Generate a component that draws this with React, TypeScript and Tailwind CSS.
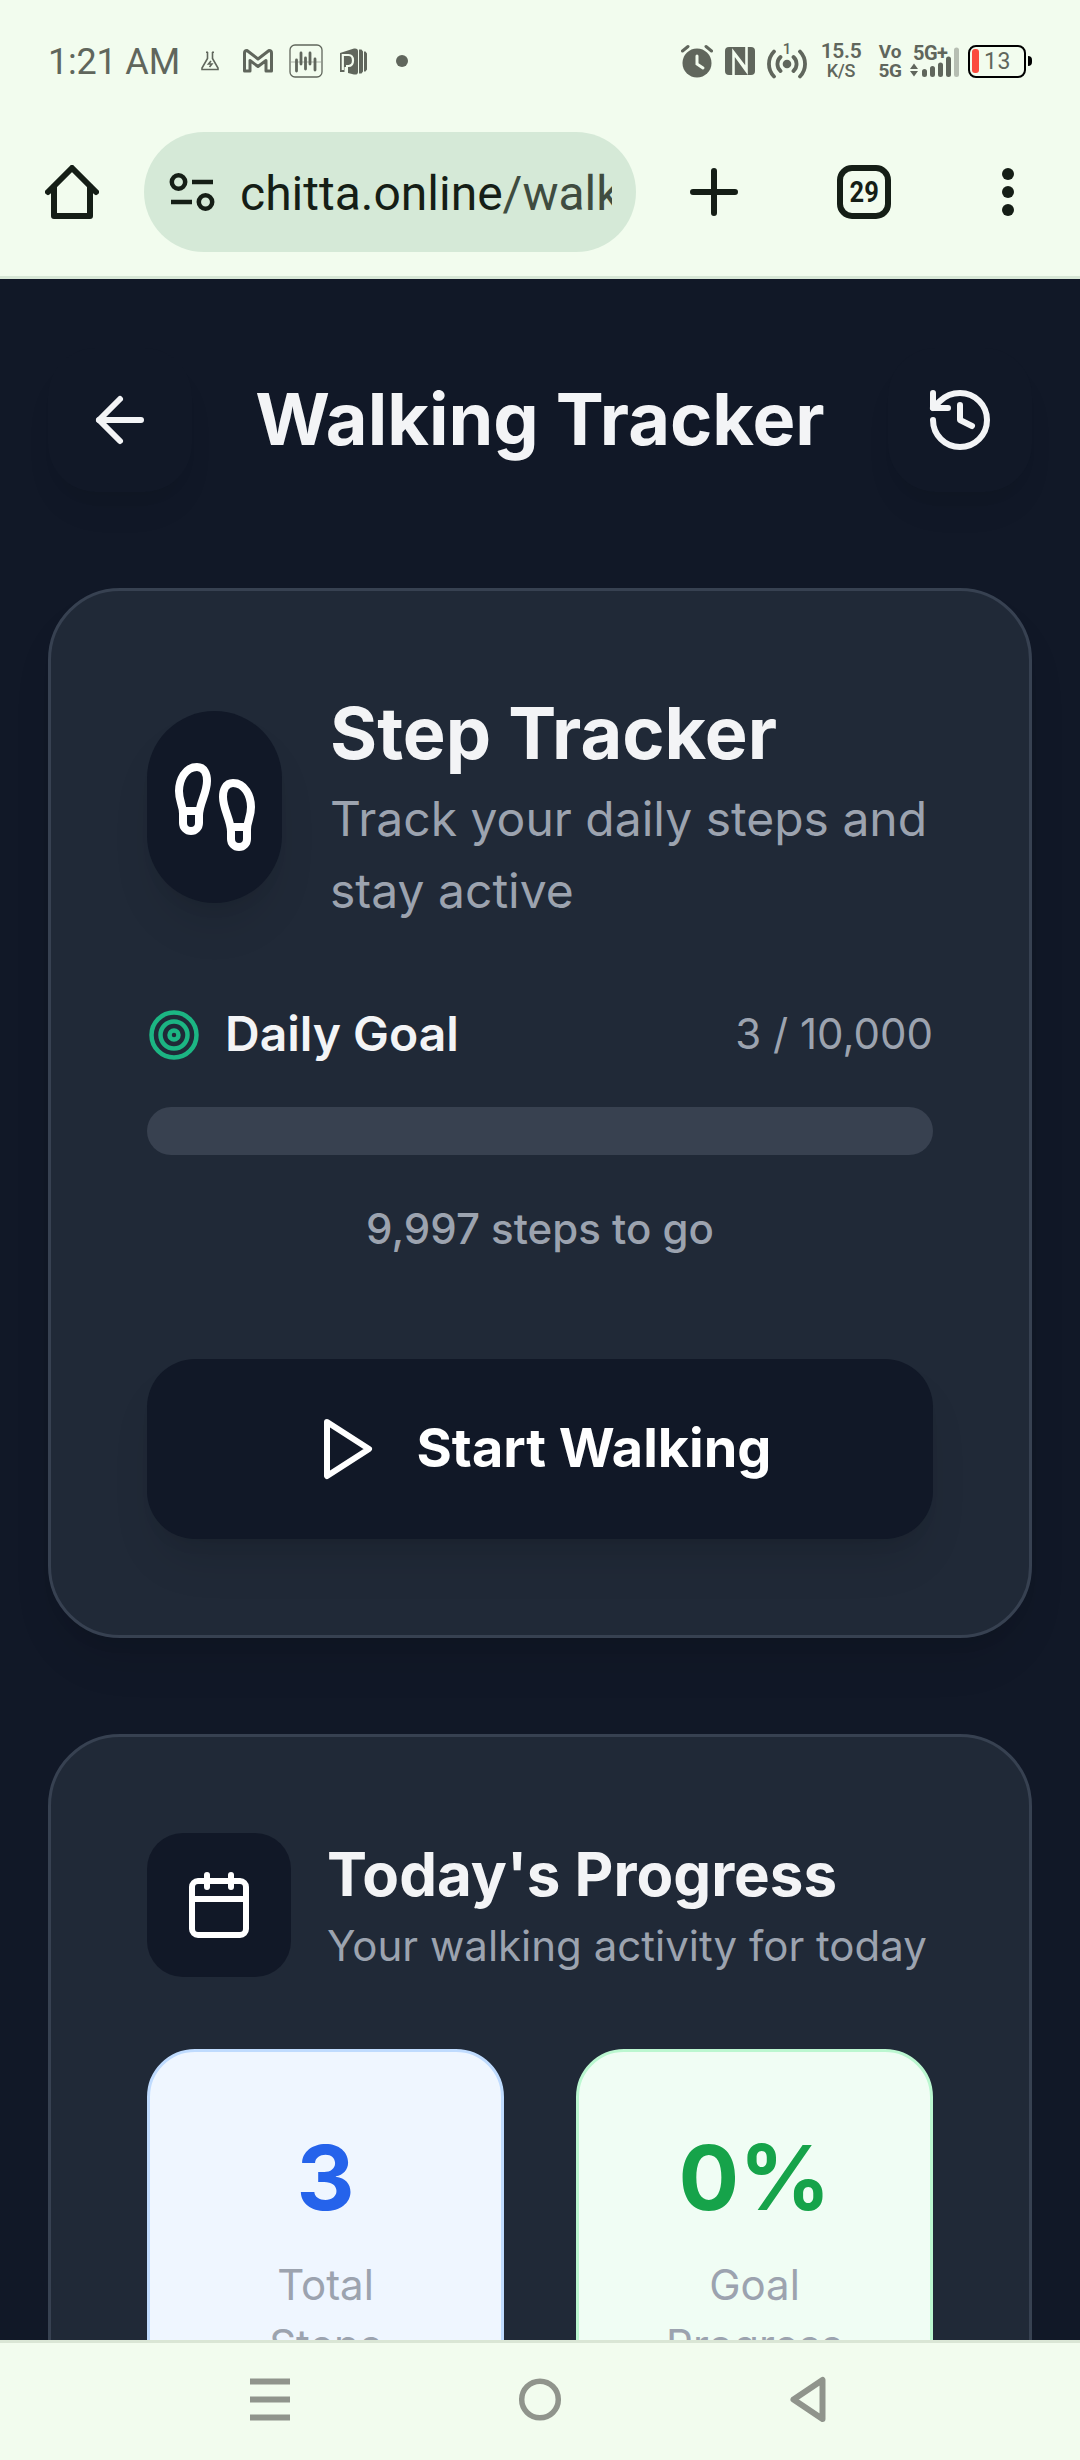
import React from 'react';
import { ArrowLeft, Calendar, Footprints, History, Target } from 'lucide-react';

const StatusBar: React.FC = () => {
  return <div className="flex items-center h-[122px] pl-[48px] text-[#60665c]">
      <span className="w-[153px] pt-[2px] text-[36px] leading-none tracking-[-0.2px] whitespace-nowrap">1:21 AM</span>

      {/* Notification icons */}
      <svg className="w-[18px] h-[20px]" viewBox="0 0 18 20" fill="none" stroke="currentColor" strokeWidth="1.6">
        <path d="M5 1.200h2M11 1.200h2M6.500 1v6.500L1 17v1.500h16V17L11.500 7.500V1" />
        <path d="M10 10L7.500 13h3.400L8.500 16" />
      </svg>
      <svg className="ml-[24px] w-[30px] h-[24px]" viewBox="0 0 30 24" fill="none" stroke="currentColor" strokeWidth="3" strokeLinejoin="round">
        <path d="M1.500 22V4Q1.500 1.500 4 1.500L15 10 26 1.500Q28.500 1.500 28.500 4V22H23V11.500L15 17.500 7 11.500V22Z" />
      </svg>
      <svg className="ml-[16px] w-[34px] h-[34px]" viewBox="0 0 34 34" fill="none" stroke="currentColor">
        <rect x="1" y="1" width="32" height="32" rx="5" strokeWidth="1.300" />
        <path d="M2 18h30" strokeWidth="0.500" />
        <path d="M7.500 16v11M12 9v11M16.500 14v11M21 9v11M26 15v11" strokeWidth="2.800" strokeLinecap="round" />
      </svg>
      <svg className="ml-[17px] w-[27px] h-[27px]" viewBox="0 0 27 27">
        <path d="M0 5L14 0.500Q18 0 18 3V24Q18 27 14 26.500L8 25V19H4.500V24H0Z" fill="currentColor" />
        <path d="M2.800 22V7H8.500Q13 7 13 12.500T8.500 18H6" fill="none" stroke="#f2fcee" strokeWidth="2.200" />
        <path d="M19 1.500h2.500l1.500 2v20l-1.500 2H19ZM24 3.500h1.500l1.500 2v16l-1.500 2H24Z" fill="currentColor" />
      </svg>
      <span className="ml-[29px] w-3 h-3 rounded-full bg-current" />

      {/* System icons */}
      <svg className="ml-[273px] w-[32px] h-[34px]" viewBox="0 0 32 34" fill="none" stroke="currentColor" strokeLinecap="round">
        <circle cx="16" cy="19" r="14.500" fill="currentColor" stroke="none" />
        <path d="M1.500 7L7 2.500M30.500 7L25 2.500" strokeWidth="3" />
        <path d="M16 12v8l6 4" stroke="#f2fcee" strokeWidth="3" />
      </svg>
      <svg className="ml-[12px] w-[30px] h-[28px]" viewBox="0 0 30 28">
        <rect width="30" height="28" rx="4" fill="currentColor" />
        <path d="M8.500 28V5L21.500 22M21.500 0V24L8.500 6" fill="none" stroke="#f2fcee" strokeWidth="2.600" />
      </svg>
      <div className="ml-[12px] w-[40px] flex flex-col items-center">
        <span className="h-[8px] text-[15px] leading-[12px] font-medium">1</span>
        <svg className="-mt-[2px] w-[40px] h-[30px]" viewBox="0 0 40 30" fill="none" stroke="currentColor" strokeWidth="3.800" strokeLinecap="round">
          <circle cx="20" cy="15" r="4.300" fill="currentColor" stroke="none" />
          <path d="M13.500 8a9.500 9.500 0 0 0 0 14M26.500 8a9.500 9.500 0 0 1 0 14M7 2.500a18 18 0 0 0 0 25M33 2.500a18 18 0 0 1 0 25" />
        </svg>
      </div>
      <div className="ml-[15px] w-[38px] flex flex-col items-center font-semibold whitespace-nowrap">
        <span className="text-[21px] leading-[19px] tracking-[-0.3px]">15.5</span>
        <span className="text-[18px] leading-[19px] font-medium tracking-[-0.3px]">K/S</span>
      </div>
      <div className="ml-[18px] w-[24px] flex flex-col items-center text-[19px] leading-[19px] font-bold">
        <span>Vo</span>
        <span className="tracking-[-0.5px]">5G</span>
      </div>
      <div className="ml-[8px] w-[50px] h-[34px] flex flex-col">
        <span className="h-[16px] pl-[3px] text-[20px] leading-[18px] font-bold tracking-[-0.5px]">5G+</span>
        <svg className="-mt-[13px] w-[50px] h-[30px] shrink-0" viewBox="0 0 50 30" fill="currentColor">
          <path d="M0 22L4 16.500 8 22ZM0 24L4 29.500 8 24Z" />
          <path d="M14.500 24.500v3M22.500 21.500v6M30.500 18v9.500M38.500 12v15.500" stroke="currentColor" strokeWidth="5" strokeLinecap="round" />
          <path d="M46.500 3v24.500" stroke="#b6beb2" strokeWidth="5" strokeLinecap="round" />
        </svg>
      </div>
      <div className="ml-[8px] flex items-center">
        <div className="w-[58px] h-[33px] p-[2px] flex items-center rounded-[8px] border-[2.500px] border-black">
          <span className="w-[7px] h-[24px] rounded-[3px] bg-[#fb4b3e]" />
          <span className="ml-[5px] text-[23px] leading-none tracking-[0.5px]">13</span>
        </div>
        <span className="ml-[2px] w-[4px] h-[10px] rounded-r-sm bg-black" />
      </div>
    </div>;
};

const BrowserBar: React.FC = () => {
  return <header className="shrink-0 h-[279px] bg-[#f2fcee] border-b-[3px] border-[#d7e7d6] font-[Roboto,sans-serif]">
      <StatusBar />
      <div className="flex items-center h-[140px] pl-[45px] text-[#151e16]">
        <svg className="w-[54px] h-[54px]" viewBox="0 0 54 54" fill="none" stroke="currentColor" strokeWidth="6" strokeLinecap="round" strokeLinejoin="round">
          <path d="M3 27L27 3 51 27" />
          <path d="M9 22V51H45V22" />
        </svg>
        <div className="ml-[45px] w-[492px] h-[120px] pl-[25px] flex items-center rounded-full bg-[#d5e9d7]">
          <svg className="w-[46px] h-[40px]" viewBox="0 0 46 40" fill="none" stroke="currentColor" strokeWidth="4.500">
            <circle cx="9.500" cy="10" r="6.700" />
            <circle cx="36.500" cy="30" r="6.700" />
            <path d="M23 10H44M2 30H23" />
          </svg>
          <span className="ml-[25px] w-[372px] pt-[3px] overflow-hidden whitespace-nowrap text-[48px] leading-[60px]">
            chitta.online<span className="text-[#3f4c40]">/walking</span>
          </span>
        </div>
        <svg className="ml-[54px] w-[48px] h-[48px]" viewBox="0 0 48 48" stroke="currentColor" strokeWidth="6" strokeLinecap="round">
          <path d="M24 3V45M3 24H45" />
        </svg>
        <div className="ml-[99px] w-[54px] h-[54px] flex items-center justify-center rounded-[15px] border-[6px] border-current">
          <span className="text-[30px] leading-none font-bold scale-x-[0.85]">29</span>
        </div>
        <div className="ml-[111px] flex flex-col gap-[6px]">
          <span className="w-3 h-3 rounded-full bg-current" />
          <span className="w-3 h-3 rounded-full bg-current" />
          <span className="w-3 h-3 rounded-full bg-current" />
        </div>
      </div>
    </header>;
};

const RoundButton: React.FC<{ children: React.ReactNode }> = ({ children }) => {
  return <button className="w-36 h-36 flex items-center justify-center rounded-[48px] bg-[#111827] shadow-[0_24px_36px_-9px_rgba(0,0,0,0.06),0_12px_18px_-12px_rgba(0,0,0,0.08)]">
      {children}
    </button>;
};

const StepTrackerCard: React.FC = () => {
  return <section className="shrink-0 h-[1050px] px-24 pt-24 mx-12 rounded-[72px] border-[3px] border-[#374151] bg-[#202937] shadow-[0_30px_45px_-9px_rgba(0,0,0,0.1),0_12px_18px_-12px_rgba(0,0,0,0.1)]">
      <div className="flex items-center gap-12">
        <div className="w-[135px] h-[192px] shrink-0 flex items-center justify-center rounded-full bg-[#111827] shadow-[0_30px_45px_-9px_rgba(0,0,0,0.1),0_12px_18px_-12px_rgba(0,0,0,0.1)]">
          <Footprints className="w-24 h-24 shrink-0 text-white" />
        </div>
        <div>
          <h2 className="-mt-[2px] mb-[2px] text-[72px] leading-[96px] font-bold text-[#f3f4f6]">Step Tracker</h2>
          <p className="text-[48px] leading-[72px] text-[#9ca3af]">Track your daily steps and stay active</p>
        </div>
      </div>

      {/* Goal progress */}
      <div className="flex items-center justify-between mt-[72px] h-[72px]">
        <div className="flex items-center gap-6">
          <Target className="w-[54px] h-[54px] text-[#1cb583]" />
          <span className="pb-[2px] text-[48px] leading-[70px] font-semibold text-[#f3f4f6]">Daily Goal</span>
        </div>
        <span className="pb-[2px] text-[42px] leading-[60px] text-[#9ca3af]">3 / 10,000</span>
      </div>
      <div className="mt-9 h-12 rounded-full bg-[#384150]" />
      <p className="mt-[44px] text-[42px] leading-[60px] font-medium text-center text-[#9ca3af]">9,997 steps to go</p>

      <button className="mt-[100px] w-full h-[180px] flex items-center justify-center gap-9 rounded-[48px] bg-[#111827] text-white text-[54px] font-bold shadow-[0_30px_45px_-9px_rgba(0,0,0,0.1),0_12px_18px_-12px_rgba(0,0,0,0.1)]">
        <svg className="w-[72px] h-[72px]" viewBox="0 0 24 24" fill="none" stroke="currentColor" strokeWidth="2" strokeLinecap="round" strokeLinejoin="round">
          <polygon points="6 3 20 12 6 21 6 3" />
        </svg>
        <span className="pb-1">Start Walking</span>
      </button>
    </section>;
};

interface StatProps {
  value: string;
  label: string;
  box: string;
  valueColor: string;
}

const Stat: React.FC<StatProps> = ({ value, label, box, valueColor }) => {
  return <div className={`p-[72px] h-[400px] rounded-[48px] border-[3px] text-center ${box}`}>
      <div className={`text-[90px] leading-[108px] font-bold ${valueColor}`}>{value}</div>
      <div className="mt-[23px] text-[42px] leading-[60px] text-[#9ca3af]">{label}</div>
    </div>;
};

const ProgressCard: React.FC = () => {
  return <section className="shrink-0 mt-24 mx-12 px-24 pt-24 h-[1000px] rounded-[72px] border-[3px] border-[#374151] bg-[#202937]">
      <div className="flex items-center gap-9">
        <div className="w-36 h-36 shrink-0 flex items-center justify-center rounded-[36px] bg-[#111827]">
          <Calendar className="w-[72px] h-[72px] text-white" />
        </div>
        <div className="-mt-[2px]">
          <h3 className="text-[60px] leading-[84px] font-bold text-[#f3f4f6]">Today's Progress</h3>
          <p className="text-[42px] leading-[60px] whitespace-nowrap text-[#9ca3af]">Your walking activity for today</p>
        </div>
      </div>
      <div className="grid grid-cols-2 gap-[72px] mt-[72px]">
        <Stat value="3" label="Total Steps" box="bg-[#eff6ff] border-[#bfdbfe]" valueColor="text-[#2563eb]" />
        <Stat value="0%" label="Goal Progress" box="bg-[#f0fdf4] border-[#bbf7d0]" valueColor="text-[#16a34a]" />
      </div>
    </section>;
};

const NavBar: React.FC = () => {
  return <nav className="shrink-0 h-[120px] flex items-center pl-[250px] pb-[3px] bg-[#f2fcee] border-t-[3px] border-[#dae6d5] text-[#90948c]">
      <svg className="w-[40px] h-[44px]" viewBox="0 0 40 44" stroke="currentColor" strokeWidth="6">
        <path d="M0 3.500H40M0 21.500H40M0 39.500H40" />
      </svg>
      <svg className="ml-[228px] w-[44px] h-[44px]" viewBox="0 0 44 44" fill="none" stroke="currentColor" strokeWidth="5.500">
        <circle cx="22" cy="21.500" r="18.300" />
      </svg>
      <svg className="ml-[228px] w-[36px] h-[48px]" viewBox="0 0 36 48" fill="none" stroke="currentColor" strokeWidth="6" strokeLinejoin="round">
        <path d="M32.500 4V43L3.500 23.500Z" />
      </svg>
    </nav>;
};

export default function App() {
  return <div className="w-[1080px] h-[2460px] flex flex-col overflow-hidden bg-[#111827] font-[Inter,sans-serif]">
      <BrowserBar />
      <main className="flex-1 min-h-0 overflow-hidden flex flex-col">
        {/* Header */}
        <div className="shrink-0 flex items-center justify-between px-12 pt-[69px] mb-24 text-[#f3f4f6]">
          <RoundButton>
            <ArrowLeft className="w-[72px] h-[72px]" />
          </RoundButton>
          <h1 className="pb-[3px] text-[72px] leading-[96px] font-bold">Walking Tracker</h1>
          <RoundButton>
            <History className="w-[72px] h-[72px]" />
          </RoundButton>
        </div>
        <StepTrackerCard />
        <ProgressCard />
      </main>
      <NavBar />
    </div>;
}
